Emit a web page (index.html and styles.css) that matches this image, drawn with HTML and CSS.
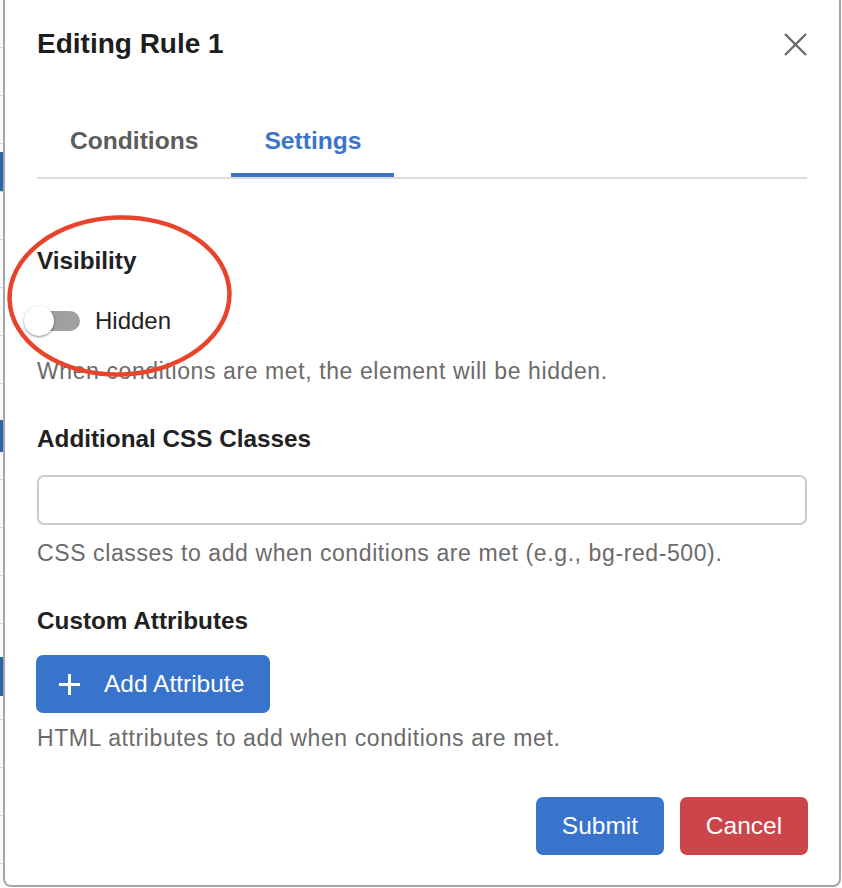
FILE: index.html
```html
<!DOCTYPE html>
<html lang="en">
<head>
<meta charset="utf-8">
<title>Editing Rule 1</title>
<link rel="stylesheet" href="styles.css">
</head>
<body>
<div class="backdrop-strip"></div>
<div class="modal">
  <div class="modal-header">
    <h1 class="modal-title">Editing Rule 1</h1>
    <button class="close-btn" aria-label="Close">
      <svg width="23" height="23" viewBox="0 0 23 23"><path d="M1 1 L22 22 M22 1 L1 22" stroke="#6a6a6a" stroke-width="2.4" fill="none"/></svg>
    </button>
  </div>
  <div class="tabs">
    <div class="tab">Conditions</div>
    <div class="tab active">Settings</div>
  </div>
  <div class="panel">
    <div class="group">
      <div class="label">Visibility</div>
      <div class="switch-row">
        <span class="switch"><span class="switch-track"></span><span class="switch-thumb"></span></span>
        <span class="switch-text">Hidden</span>
      </div>
      <div class="helper helper-toggle">When conditions are met, the element will be hidden.</div>
    </div>
    <div class="group">
      <div class="label">Additional CSS Classes</div>
      <input class="text-input" type="text">
      <div class="helper helper-input">CSS classes to add when conditions are met (e.g., bg-red-500).</div>
    </div>
    <div class="group">
      <div class="label">Custom Attributes</div>
      <button class="btn btn-add">
        <svg width="21" height="21" viewBox="0 0 21 21"><path d="M10.5 0 V21 M0 10.5 H21" stroke="#fff" stroke-width="3" fill="none"/></svg>
        <span>Add Attribute</span>
      </button>
      <div class="helper helper-btn">HTML attributes to add when conditions are met.</div>
    </div>
    <div class="footer">
      <button class="btn btn-primary">Submit</button>
      <button class="btn btn-danger">Cancel</button>
    </div>
  </div>
</div>
<svg class="annotation" width="240" height="180" viewBox="0 0 240 180"><ellipse cx="119.5" cy="86" rx="110" ry="78.5" fill="none" stroke="#e8442b" stroke-width="4.5" transform="rotate(-2 119.5 86)"/></svg>
</body>
</html>
```
FILE: styles.css
```css
* { box-sizing: border-box; }
html, body { margin: 0; padding: 0; }
body {
  width: 842px;
  height: 888px;
  overflow: hidden;
  background: #ffffff;
  font-family: "Liberation Sans", Arial, Helvetica, sans-serif;
  display: flex;
  align-items: flex-start;
  position: relative;
}
.backdrop-strip {
  width: 3px;
  height: 888px;
  flex: none;
  background:
    linear-gradient(to bottom, transparent 152px, #2f63a8 152px, #2f63a8 191px, transparent 191px),
    linear-gradient(to bottom, transparent 420px, #2f63a8 420px, #2f63a8 452px, transparent 452px),
    linear-gradient(to bottom, transparent 657px, #2f63a8 657px, #2f63a8 696px, transparent 696px),
    repeating-linear-gradient(to bottom, #fafafa 0, #fafafa 47px, #d4d4d4 47px, #d4d4d4 48px),
    #fafafa;
}
.modal {
  width: 838px;
  flex: none;
  background: #fff;
  border: 2px solid #a6a6a6;
  border-top: none;
  border-radius: 0 0 8px 8px;
  padding: 0 32px 30px 32px;
}
.modal-header {
  padding-top: 27px;
  height: 61px;
  display: flex;
  align-items: center;
  justify-content: space-between;
}
.modal-title {
  margin: 0;
  font-size: 28px;
  line-height: 34px;
  font-weight: 700;
  color: #1d1d1d;
}
.close-btn {
  border: none;
  background: none;
  padding: 0;
  width: 23px;
  height: 23px;
  display: flex;
}
.tabs {
  margin-top: 47px;
  display: flex;
  border-bottom: 2px solid #dcdcdc;
}
.tab {
  height: 69px;
  padding: 0 33px;
  display: flex;
  align-items: center;
  font-size: 24.6px;
  font-weight: 700;
  color: #5c5c5c;
  border-bottom: 4px solid transparent;
}
.tab.active {
  color: #3a75cd;
  border-bottom-color: #3a75cd;
}
.panel {
  padding-top: 67px;
}
.group + .group { margin-top: 38px; }
.label {
  font-size: 24.3px;
  line-height: 30px;
  font-weight: 700;
  color: #212121;
}
.switch-row {
  margin-top: 25px;
  height: 40px;
  display: flex;
  align-items: center;
}
.switch {
  position: relative;
  margin-left: -13px;
  width: 56px;
  height: 40px;
  flex: none;
}
.switch-track {
  position: absolute;
  left: 4px;
  top: 10px;
  width: 52px;
  height: 20px;
  border-radius: 10px;
  background: #a0a0a0;
}
.switch-thumb {
  position: absolute;
  left: 0;
  top: 5px;
  width: 30px;
  height: 30px;
  border-radius: 50%;
  background: #fff;
  box-shadow: 0 1px 3px rgba(0,0,0,0.35), 0 1px 1px rgba(0,0,0,0.14);
}
.switch-text {
  margin-left: 15px;
  font-size: 24px;
  color: #222;
}
.helper {
  font-size: 23px;
  line-height: 30px;
  letter-spacing: 0.6px;
  color: #6b6b6b;
}
.helper-toggle { margin-top: 15px; }
.helper-input { margin-top: 13px; }
.helper-btn { margin-top: 10px; }
.text-input {
  display: block;
  margin-top: 21px;
  width: 100%;
  height: 50px;
  border: 2px solid #cbcbcb;
  border-radius: 7px;
  background: #fff;
  font: inherit;
}
.btn {
  border: none;
  border-radius: 7px;
  color: #fff;
  font-family: inherit;
  font-size: 24.5px;
  height: 58px;
  display: flex;
  align-items: center;
  justify-content: center;
}
.btn-add {
  margin-top: 19px;
  margin-left: -1px;
  width: 234px;
  justify-content: flex-start;
  padding: 0 0 0 23px;
  gap: 24px;
  background: #3874cb;
}
.footer {
  margin-top: 44px;
  display: flex;
  justify-content: flex-end;
  gap: 16px;
  margin-right: -1px;
}
.btn-primary { width: 128px; background: #3874cb; }
.btn-danger { width: 128px; background: #cc454b; }
.annotation {
  position: absolute;
  left: 0;
  top: 210px;
  pointer-events: none;
}
```
